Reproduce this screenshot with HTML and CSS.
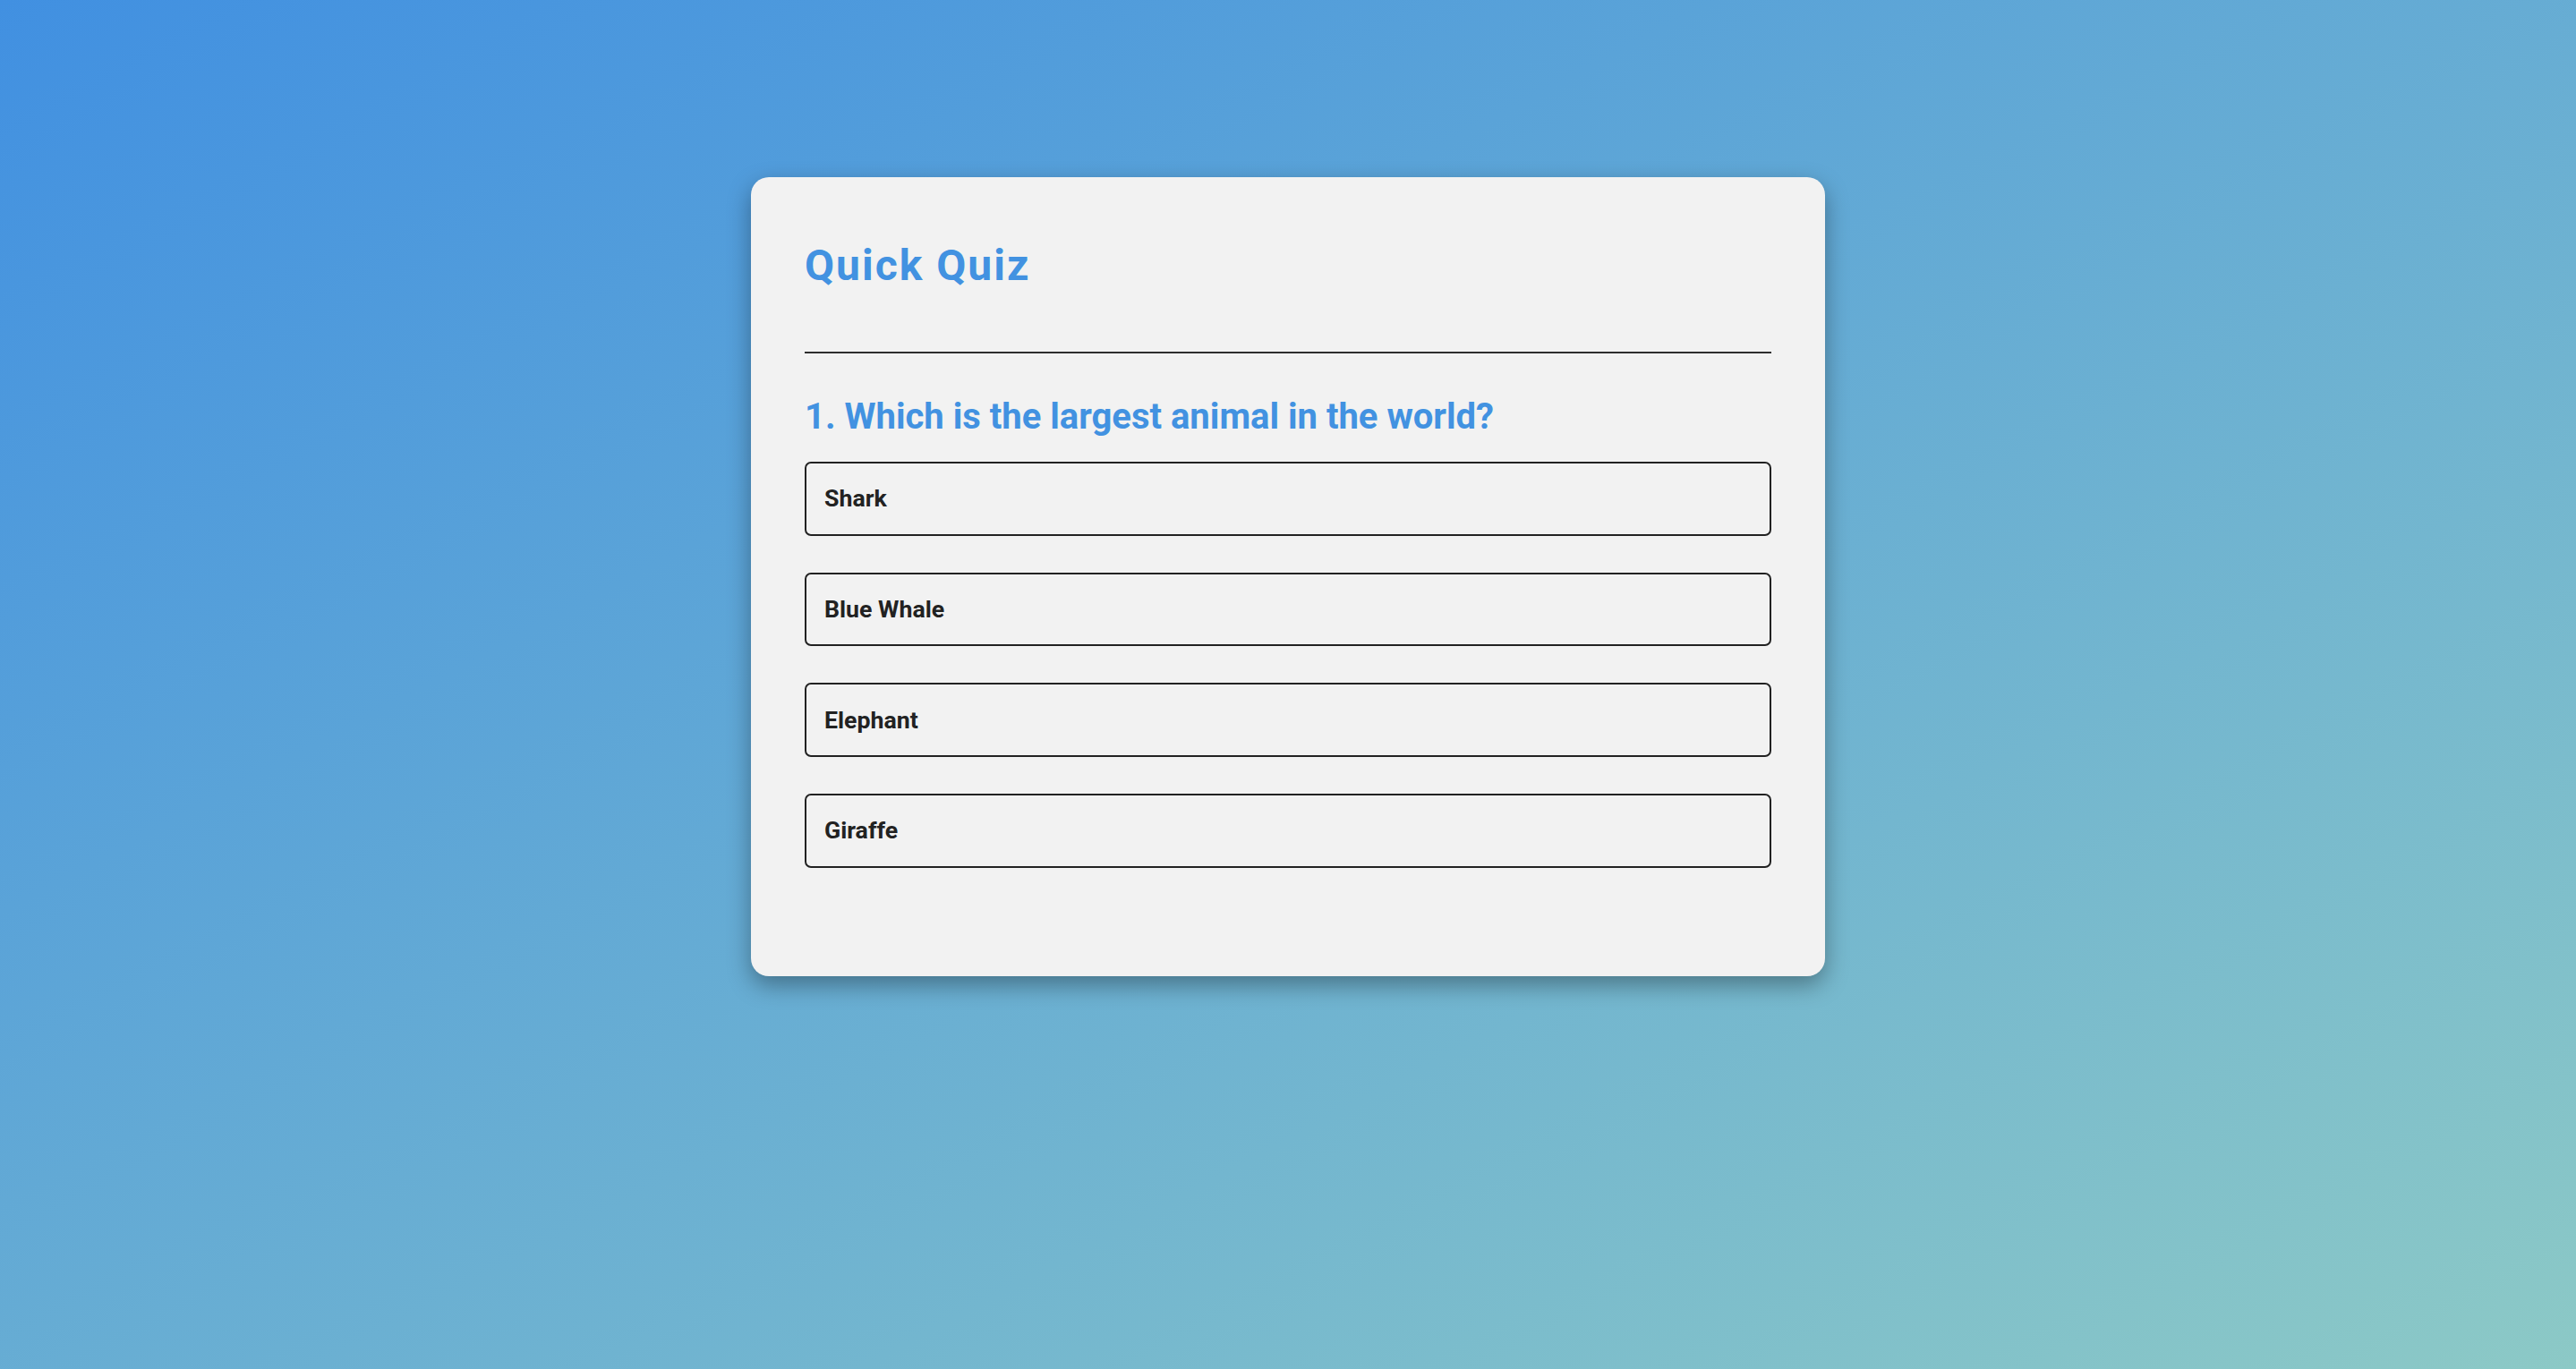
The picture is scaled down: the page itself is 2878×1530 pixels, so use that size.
FILE: index.html
```html
<!DOCTYPE html>
<html lang="en">
<head>
<meta charset="utf-8">
<title>Quick Quiz</title>
<link rel="stylesheet" href="styles.css">
</head>
<body>
<main class="page">
  <section class="card">
    <h1 class="title">Quick Quiz</h1>
    <hr class="divider">
    <h2 class="question">1. Which is the largest animal in the world?</h2>
    <div class="options">
      <div class="option">Shark</div>
      <div class="option">Blue Whale</div>
      <div class="option">Elephant</div>
      <div class="option">Giraffe</div>
    </div>
  </section>
</main>
</body>
</html>
```
FILE: styles.css
```css
* { box-sizing: border-box; }
html, body { margin: 0; padding: 0; }
body {
  min-height: 100vh;
  background: linear-gradient(to bottom right, #4190e1, #8cc9c6);
  font-family: Roboto, "Noto Sans", sans-serif;
}
.page {
  display: flex;
  justify-content: center;
  padding-top: 198px;
}
.card {
  width: 1200px;
  background: #f2f2f2;
  border-radius: 20px;
  padding: 70px 60px 121px 60px;
  box-shadow: 0 10px 26px rgba(0, 0, 0, 0.35);
}
.title {
  margin: 0;
  font-size: 48px;
  line-height: 58px;
  font-weight: 700;
  letter-spacing: 2px;
  color: #4292e1;
}
.divider {
  margin: 67px 0 0 0;
  border: 0;
  border-top: 2px solid #2e2e2e;
}
.question {
  margin: 47px 0 0 0;
  font-size: 40px;
  line-height: 48px;
  font-weight: 700;
  color: #4292e1;
}
.options {
  margin-top: 26px;
  display: flex;
  flex-direction: column;
  gap: 41.2px;
}
.option {
  height: 82.5px;
  border: 2px solid #222;
  border-radius: 7px;
  padding: 0 20px;
  display: flex;
  align-items: center;
  font-size: 26.7px;
  font-weight: 700;
  color: #222;
}
```
